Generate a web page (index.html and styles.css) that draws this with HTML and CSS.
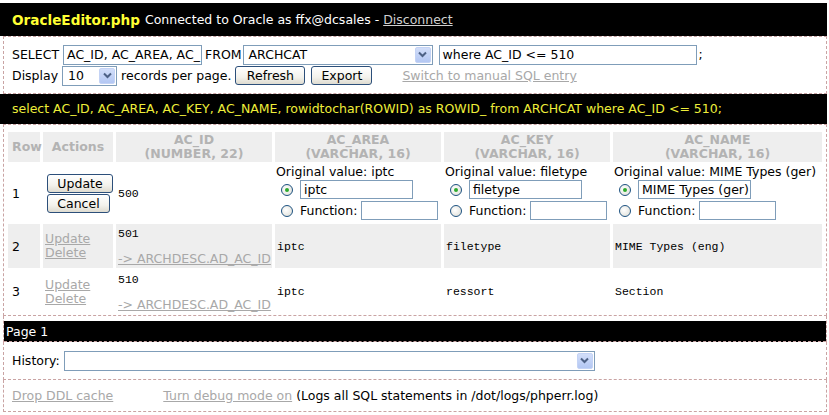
FILE: index.html
```html
<!DOCTYPE html>
<html>
<head>
<meta charset="utf-8">
<title>OracleEditor.php</title>
<link rel="stylesheet" href="styles.css">
</head>
<body>
<div class="page">
  <div class="topbar">
    <span class="app">OracleEditor.php</span>
    <span class="conn">Connected to Oracle as ffx@dcsales - <a class="disc" href="#">Disconnect</a></span>
  </div>

  <div class="box formbox">
    <div class="frow">
      <span>SELECT</span>
      <span class="inp w-cols">AC_ID, AC_AREA, AC_</span>
      <span class="from">FROM</span>
      <span class="sel w-table"><span class="seltxt">ARCHCAT</span><span class="arr"><svg width="9" height="7" viewBox="0 0 9 7"><path d="M1 1.5 L4.5 5 L8 1.5" fill="none" stroke="#4d6185" stroke-width="2"/></svg></span></span>
      <span class="inp w-where">where AC_ID &lt;= 510</span>
      <span class="semi">;</span>
    </div>
    <div class="frow">
      <span>Display</span>
      <span class="sel w-disp"><span class="seltxt">10</span><span class="arr"><svg width="9" height="7" viewBox="0 0 9 7"><path d="M1 1.5 L4.5 5 L8 1.5" fill="none" stroke="#4d6185" stroke-width="2"/></svg></span></span>
      <span>records per page.</span>
      <span class="btn w-refresh">Refresh</span>
      <span class="btn w-export">Export</span>
      <a class="lnk switch" href="#">Switch to manual SQL entry</a>
    </div>
  </div>

  <div class="sqlbar">select AC_ID, AC_AREA, AC_KEY, AC_NAME, rowidtochar(ROWID) as ROWID_ from ARCHCAT where AC_ID &lt;= 510;</div>

  <div class="box tablebox">
    <table class="grid">
      <colgroup>
        <col class="c-row"><col class="c-act"><col class="c-id"><col class="c-area"><col class="c-key"><col class="c-name">
      </colgroup>
      <thead>
        <tr>
          <th>Row</th>
          <th>Actions</th>
          <th>AC_ID<br>(NUMBER, 22)</th>
          <th>AC_AREA<br>(VARCHAR, 16)</th>
          <th>AC_KEY<br>(VARCHAR, 16)</th>
          <th>AC_NAME<br>(VARCHAR, 16)</th>
        </tr>
      </thead>
      <tbody>
        <tr class="edit">
          <td>1</td>
          <td class="acts">
            <span class="btn w-update">Update</span>
            <span class="btn w-cancel">Cancel</span>
          </td>
          <td class="mono">500</td>
          <td class="ed">
            <div class="orig">Original value: iptc</div>
            <div class="erow"><span class="radio on"></span><span class="inp w-val">iptc</span></div>
            <div class="erow"><span class="radio"></span><span class="fn">Function:</span><span class="inp w-fn"></span></div>
          </td>
          <td class="ed">
            <div class="orig">Original value: filetype</div>
            <div class="erow"><span class="radio on"></span><span class="inp w-val">filetype</span></div>
            <div class="erow"><span class="radio"></span><span class="fn">Function:</span><span class="inp w-fn"></span></div>
          </td>
          <td class="ed">
            <div class="orig">Original value: MIME Types (ger)</div>
            <div class="erow"><span class="radio on"></span><span class="inp w-val">MIME Types (ger)</span></div>
            <div class="erow"><span class="radio"></span><span class="fn">Function:</span><span class="inp w-fn"></span></div>
          </td>
        </tr>
        <tr class="alt r2">
          <td>2</td>
          <td class="links"><a class="lnk" href="#">Update</a><a class="lnk" href="#">Delete</a></td>
          <td class="idcell"><div class="mono">501</div><a class="lnk fk" href="#">-&gt; ARCHDESC.AD_AC_ID</a></td>
          <td class="mono">iptc</td>
          <td class="mono">filetype</td>
          <td class="mono">MIME Types (eng)</td>
        </tr>
        <tr class="r3">
          <td>3</td>
          <td class="links"><a class="lnk" href="#">Update</a><a class="lnk" href="#">Delete</a></td>
          <td class="idcell"><div class="mono">510</div><a class="lnk fk" href="#">-&gt; ARCHDESC.AD_AC_ID</a></td>
          <td class="mono">iptc</td>
          <td class="mono">ressort</td>
          <td class="mono">Section</td>
        </tr>
      </tbody>
    </table>
  </div>

  <div class="box pagebox">
    <div class="pagebar">Page 1</div>
  </div>

  <div class="box histbox">
    <span>History:</span>
    <span class="sel w-hist"><span class="seltxt"></span><span class="arr"><svg width="9" height="7" viewBox="0 0 9 7"><path d="M1 1.5 L4.5 5 L8 1.5" fill="none" stroke="#4d6185" stroke-width="2"/></svg></span></span>
  </div>

  <div class="box footbox">
    <a class="lnk" href="#">Drop DDL cache</a>
    <a class="lnk debug" href="#">Turn debug mode on</a>
    <span>(Logs all SQL statements in /dot/logs/phperr.log)</span>
  </div>
</div>
</body>
</html>
```

FILE: styles.css
```css
* { box-sizing: border-box; }
html, body { margin: 0; padding: 0; background: #fff; }
body {
  font-family: "DejaVu Sans", Verdana, sans-serif;
  font-size: 12.5px;
  color: #000;
  padding-top: 3px;
}
.page { width: 827px; }

.topbar {
  background: #000;
  height: 33px;
  padding: 0 0 0 12px;
  display: flex;
  align-items: center;
  gap: 5px;
  color: #fff;
}
.app { color: #ffff33; font-weight: bold; font-size: 13.6px; }
.conn { font-size: 12.5px; }
.disc { color: #d0d0d0; text-decoration: underline; }

.box {
  margin-left: 3px;
  width: 824px;
  border: 1px dashed #c9a3a3;
}
.formbox {
  height: 58px;
  padding: 7px 0 0 8px;
}
.frow {
  display: flex;
  align-items: center;
  gap: 4px;
  height: 21px;
}

.inp {
  display: inline-block;
  height: 20px;
  border: 1px solid #7f9db9;
  background: #fff;
  padding: 1px 2px 0 3px;
  line-height: 16px;
  white-space: nowrap;
  overflow: hidden;
  font-size: 12.5px;
}
.w-cols { width: 139px; }
.from { margin-left: -1px; margin-right: -3px; }
.w-where { width: 258px; margin-left: 2px; }
.semi { margin-left: -2px; }
.w-val { width: 113px; height: 19px; line-height: 15px; }
.w-fn { width: 77px; height: 19px; }

.sel {
  display: inline-flex;
  align-items: center;
  height: 20px;
  border: 1px solid #7f9db9;
  background: #fff;
  padding: 1px;
}
.seltxt { flex: 1; padding-left: 4px; white-space: nowrap; }
.arr {
  width: 16px;
  height: 16px;
  border-radius: 2px;
  background: linear-gradient(#d2def9, #b3c7f3);
  border: 1px solid #c4d3f5;
  display: flex;
  align-items: center;
  justify-content: center;
}
.w-table { width: 190px; }
.w-disp { width: 55px; }
.w-hist { width: 531px; margin-left: 4px; }

.btn {
  display: inline-flex;
  align-items: center;
  justify-content: center;
  height: 19px;
  border: 1px solid #2c4f7a;
  border-radius: 3px;
  background: linear-gradient(#ffffff, #f3f2ec 60%, #dedbd0);
  font-size: 12.5px;
  color: #000;
}
.w-refresh { width: 70px; }
.w-export { width: 61px; margin-left: 2px; }
.w-update { width: 66px; }
.w-cancel { width: 63px; }

.lnk { color: #a8a8a8; text-decoration: underline; }
.switch { margin-left: 26px; }

.sqlbar {
  background: #000;
  color: #eeee3a;
  height: 30px;
  line-height: 30px;
  padding-left: 12px;
  white-space: nowrap;
  font-size: 12.5px;
}

.tablebox {
  height: 192px;
  padding: 5px 0 0 1px;
}
.grid {
  table-layout: fixed;
  width: 820px;
  border-collapse: separate;
  border-spacing: 3px 2px;
}
.c-row { width: 32px; }
.c-act { width: 70px; }
.c-id { width: 156px; }
.c-area { width: 166px; }
.c-key { width: 166px; }
.c-name { width: 209px; }

.grid th {
  background: #eeeeee;
  color: #b3b3b3;
  font-weight: bold;
  height: 30px;
  line-height: 14px;
  padding: 0;
  text-align: center;
}
.grid th:first-child { text-align: left; padding-left: 4px; }
.grid td {
  padding: 0 2px;
  vertical-align: middle;
  white-space: nowrap;
  overflow: hidden;
}
.grid td:first-child { padding-left: 4px; }
.mono { font-family: "Liberation Mono", "Courier New", monospace; font-size: 11.5px; }

.edit td { height: 58px; }
.acts { padding-left: 3px !important; }
.acts .btn { display: flex; margin: 1px 0 1px 1px; }
.ed { padding: 0 0 0 1px !important; vertical-align: top !important; }
.orig { height: 15px; line-height: 15px; margin-top: 0; }
.erow { display: flex; align-items: center; height: 21px; }
.radio {
  width: 12px;
  height: 12px;
  border-radius: 50%;
  border: 1px solid #1d5281;
  background: radial-gradient(circle at 40% 40%, #fff, #dcdcd4);
  margin: 0 7px 0 5px;
  display: inline-flex;
  align-items: center;
  justify-content: center;
}
.radio.on::after {
  content: "";
  width: 4px;
  height: 4px;
  border-radius: 50%;
  background: #2eaa2e;
}
.fn { margin-right: 4px; }

.alt td { background: #eeeeee; }
.r2 td { height: 44px; }
.r3 td { height: 43px; }
.links .lnk { display: block; line-height: 14px; }
.links { padding-left: 2px !important; }
.idcell { vertical-align: top !important; }
.idcell .mono { margin-top: 3px; line-height: 14px; }
.fk { display: block; margin-top: 11px; line-height: 14px; }

.pagebox {
  border-top: none;
  border-bottom: none;
  height: 26px;
  padding-top: 5px;
}
.pagebar {
  background: #000;
  color: #fff;
  height: 21px;
  line-height: 21px;
  padding-left: 2px;
  font-size: 12.5px;
  border-bottom: 1px dashed #c9a3a3;
}

.histbox {
  border-top: none;
  height: 38px;
  display: flex;
  align-items: center;
  padding-left: 8px;
}
.footbox {
  border-top: none;
  height: 32px;
  display: flex;
  align-items: center;
  padding-left: 8px;
}
.debug { margin-left: 50px; margin-right: 4px; }
```
